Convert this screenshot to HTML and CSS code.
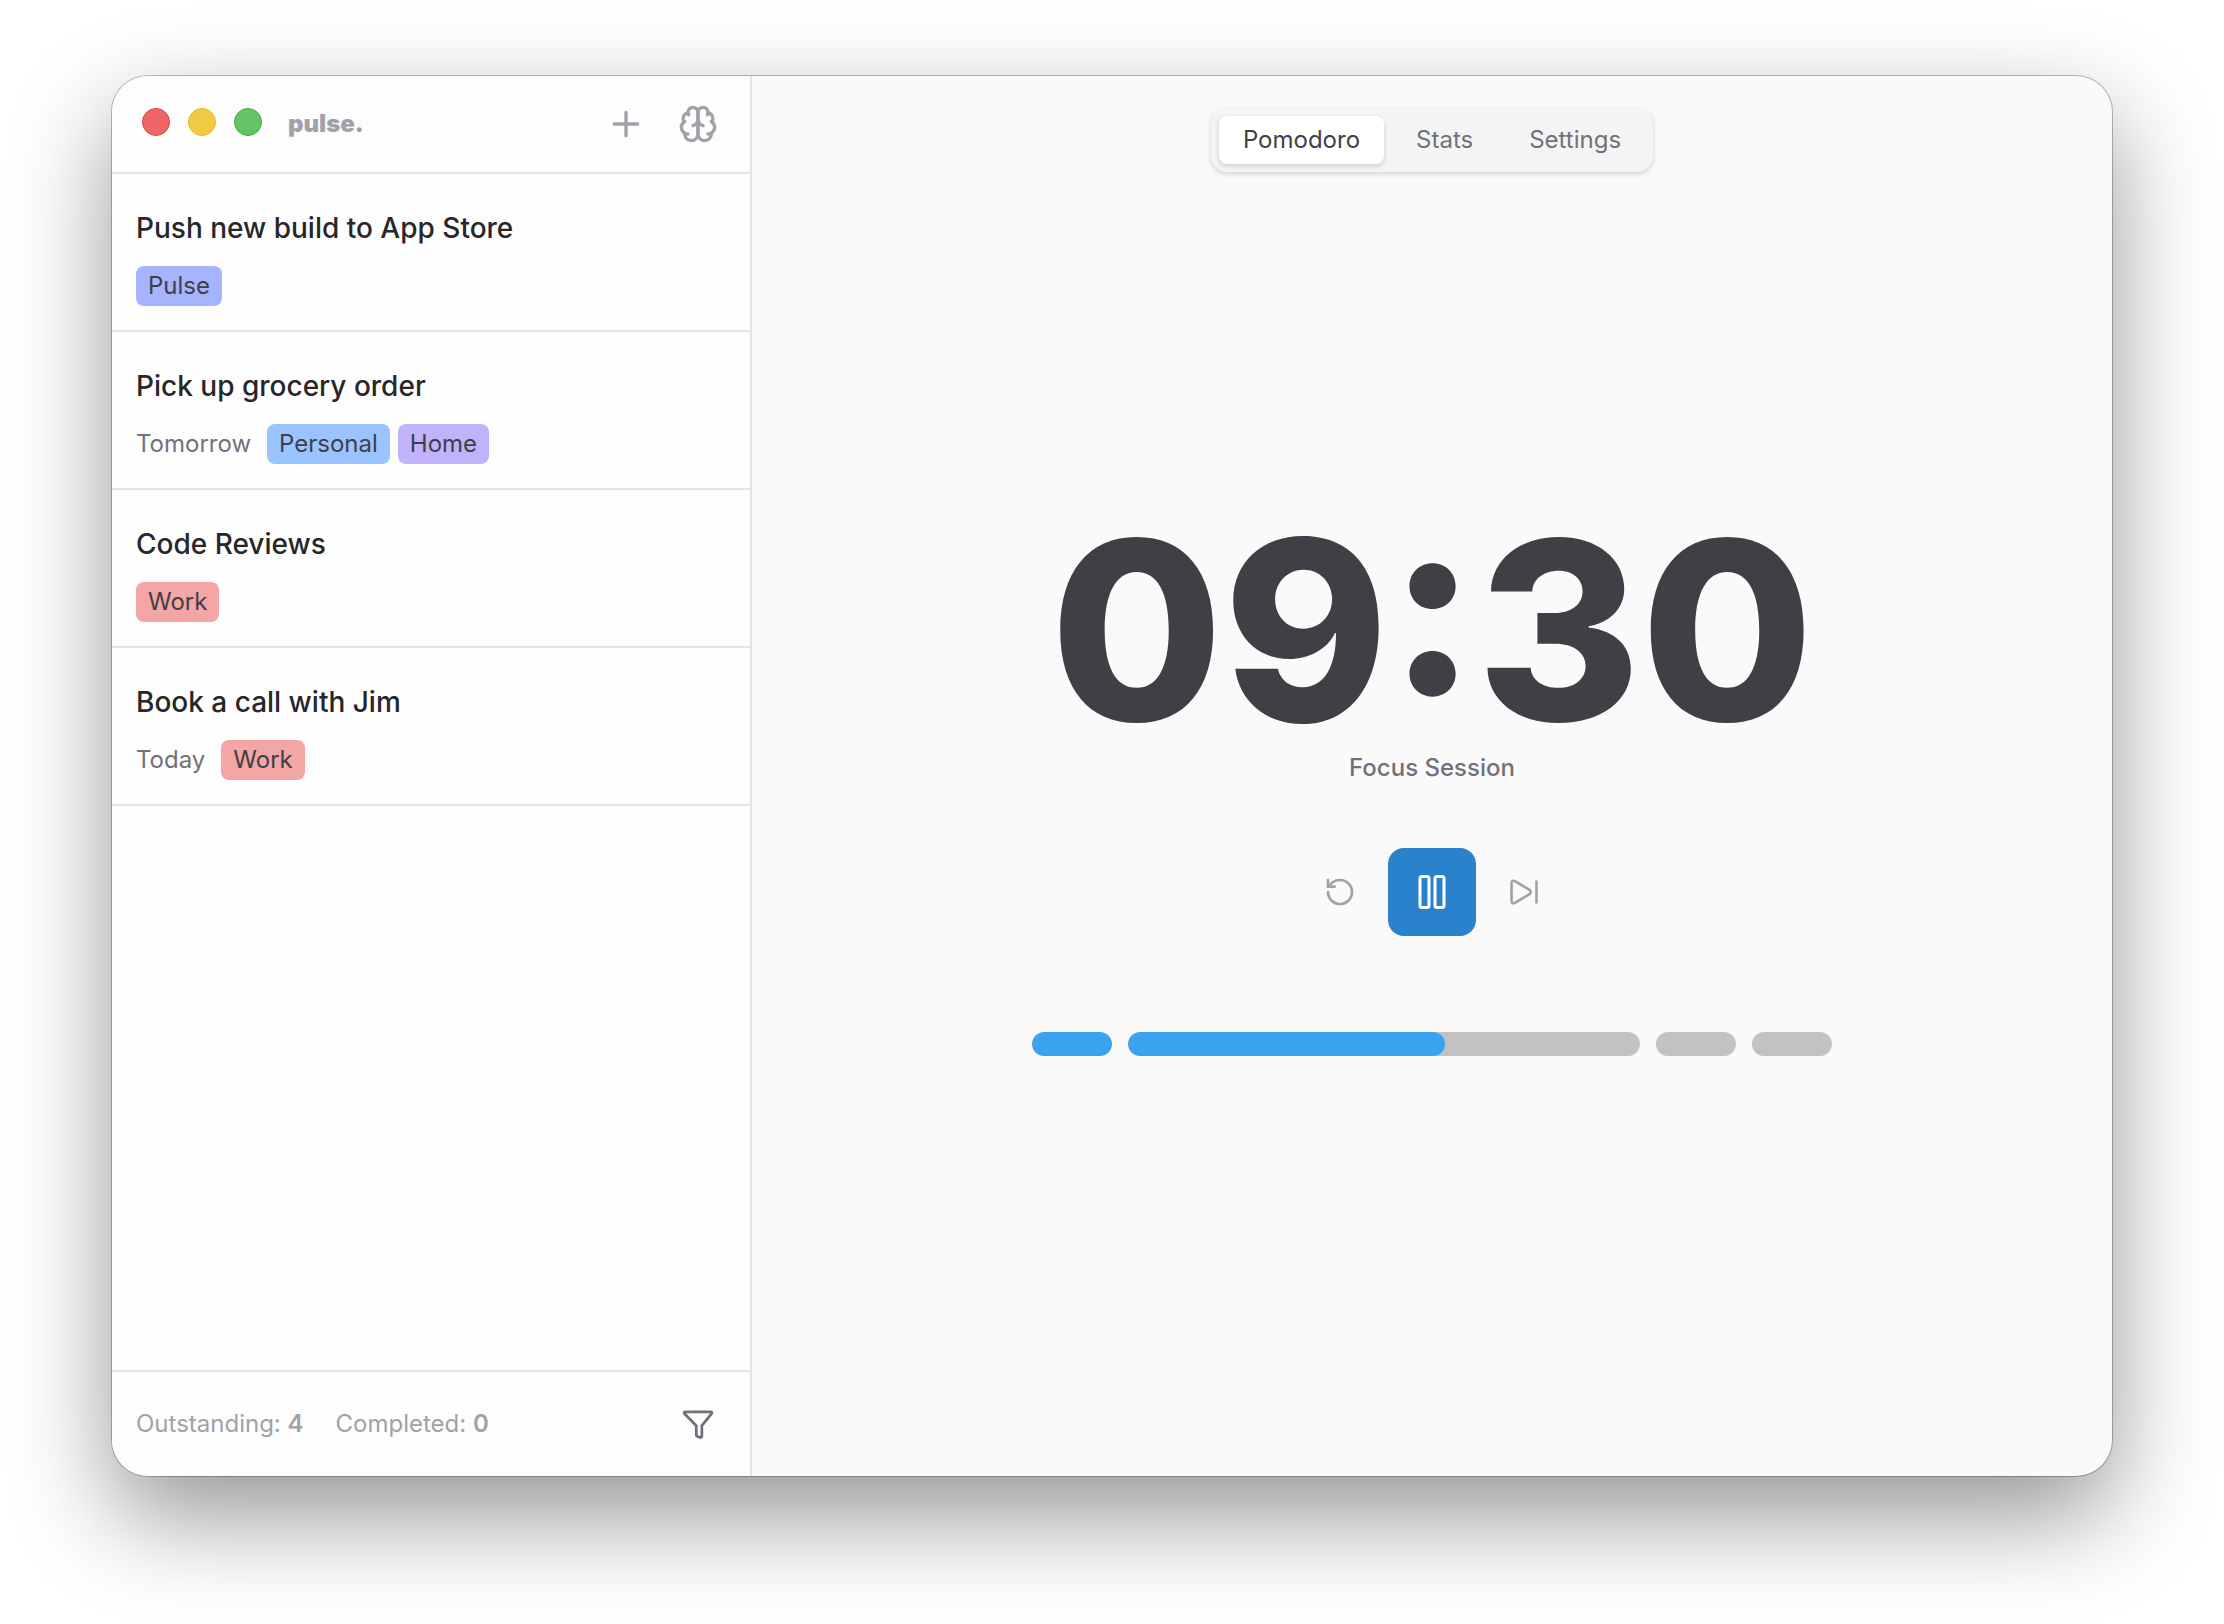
FILE: index.html
```html
<!DOCTYPE html>
<html lang="en">
<head>
    <meta charset="UTF-8">
    <meta name="viewport" content="width=device-width, initial-scale=1.0">
    <title>pulse.</title>
    <link rel="stylesheet" href="styles.css">
</head>
<body>
    <div class="window">
        <aside class="sidebar">
            <header class="titlebar">
                <div class="lights">
                    <button class="light close" aria-label="Close"></button>
                    <button class="light minimize" aria-label="Minimize"></button>
                    <button class="light maximize" aria-label="Maximize"></button>
                </div>
                <span class="logo">pulse.</span>
                <div class="actions">
                    <button class="icon-btn" aria-label="Add task">
                        <svg class="icon-lg" viewBox="0 0 24 24"><path d="M5 12h14M12 5v14"/></svg>
                    </button>
                    <button class="icon-btn" aria-label="Focus mode">
                        <svg class="icon-lg" viewBox="0 0 24 24">
                            <path d="M12 5a3 3 0 1 0-5.997.125 4 4 0 0 0-2.526 5.77 4 4 0 0 0 .556 6.588A4 4 0 1 0 12 18Z"/>
                            <path d="M12 5a3 3 0 1 1 5.997.125 4 4 0 0 1 2.526 5.77 4 4 0 0 1-.556 6.588A4 4 0 1 1 12 18Z"/>
                            <path d="M15 13a4.5 4.5 0 0 1-3-4 4.5 4.5 0 0 1-3 4"/>
                            <path d="M17.599 6.5a3 3 0 0 0 .399-1.375M6.003 5.125A3 3 0 0 0 6.401 6.5M3.477 10.896a4 4 0 0 1 .585-.396M19.938 10.5a4 4 0 0 1 .585.396M6 18a4 4 0 0 1-1.967-.516M19.967 17.484A4 4 0 0 1 18 18"/>
                        </svg>
                    </button>
                </div>
            </header>

            <ul class="tasks">
                <li class="task">
                    <h2>Push new build to App Store</h2>
                    <div class="meta"><span class="tag indigo">Pulse</span></div>
                </li>
                <li class="task">
                    <h2>Pick up grocery order</h2>
                    <div class="meta">
                        <span class="due">Tomorrow</span>
                        <span class="tag blue">Personal</span>
                        <span class="tag violet">Home</span>
                    </div>
                </li>
                <li class="task">
                    <h2>Code Reviews</h2>
                    <div class="meta"><span class="tag red">Work</span></div>
                </li>
                <li class="task">
                    <h2>Book a call with Jim</h2>
                    <div class="meta">
                        <span class="due">Today</span>
                        <span class="tag red">Work</span>
                    </div>
                </li>
            </ul>

            <footer class="summary">
                <span>Outstanding: <b>4</b></span>
                <span>Completed: <b>0</b></span>
                <button class="icon-btn filter" aria-label="Filter tasks">
                    <svg class="icon-sm" viewBox="0 0 15 15"><path stroke-width="1.3" d="M1.5 1.8h12a.5.5 0 0 1 .4.8L9.3 8.3v5a.6.6 0 0 1-.8.5l-1.4-.6a.6.6 0 0 1-.4-.5V8.3L1.1 2.6a.5.5 0 0 1 .4-.8Z"/></svg>
                </button>
            </footer>
        </aside>

        <main class="content">
            <nav class="tabs">
                <button class="tab active">Pomodoro</button>
                <button class="tab">Stats</button>
                <button class="tab">Settings</button>
            </nav>

            <section class="timer">
                <div class="time">09:30</div>
                <p class="session">Focus Session</p>

                <div class="controls">
                    <button class="icon-btn" aria-label="Restart">
                        <svg class="icon-sm" viewBox="0 0 24 24"><path d="M3 12a9 9 0 1 0 9-9 9.750 9.750 0 0 0-6.740 2.740L3 8"/><path d="M3 3v5h5"/></svg>
                    </button>
                    <button class="pause" aria-label="Pause">
                        <svg class="icon-pause" viewBox="0 0 40 40"><rect x="8" y="4.500" width="9" height="31" rx="2"/><rect x="23" y="4.500" width="9" height="31" rx="2"/></svg>
                    </button>
                    <button class="icon-btn" aria-label="Skip">
                        <svg class="icon-sm" viewBox="0 0 32 32"><path stroke-width="2.600" d="M3.500 7.500v17q0 4 3.500 2.300l14.500-8.600q2.600-2.200 0-4.400L7 5.200q-3.500-1.700-3.500 2.300Z"/><path stroke-width="2.600" d="M28.500 5.500v21"/></svg>
                    </button>
                </div>

                <div class="progress">
                    <div class="bar short"><div class="fill" style="width: 100%"></div></div>
                    <div class="bar"><div class="fill" style="width: 62%"></div></div>
                    <div class="bar short"></div>
                    <div class="bar short"></div>
                </div>
            </section>
        </main>
    </div>
</body>
</html>
```

FILE: styles.css
```css
* {
    box-sizing: border-box;
}
body {
    margin: 0;
    padding: 76px 112px 148px;
    height: 100vh;
    background: #fff;
    font-family: Inter, "Liberation Sans", sans-serif;
    font-size: 24px;
    line-height: 32px;
    color: #71717a;
}
button {
    border: 0;
    padding: 0;
    background: none;
    font: inherit;
    color: inherit;
    cursor: pointer;
}
svg {
    display: block;
    fill: none;
    stroke: currentColor;
    stroke-width: 2;
    stroke-linecap: round;
    stroke-linejoin: round;
}
.window {
    display: flex;
    height: 100%;
    border-radius: 36px;
    background: #fafafa;
    overflow: hidden;
    box-shadow: 0 0 0 1px rgba(0, 0, 0, 0.25), 0 40px 100px rgba(0, 0, 0, 0.42);
}

/* Sidebar */
.sidebar {
    display: flex;
    flex-direction: column;
    width: 32%;
    background: #fdfdfd;
    border-right: 2px solid #e4e4e7;
}
.titlebar {
    display: flex;
    align-items: center;
    height: 98px;
    padding: 0 32px 0 30px;
    border-bottom: 2px solid #e4e4e7;
    color: #a1a1aa;
}
.lights {
    display: flex;
    gap: 18px;
    padding-bottom: 4px;
}
.light {
    width: 28px;
    height: 28px;
    border-radius: 50%;
    border: 1px solid;
}
.close {
    background: #ee6666;
    border-color: #e14545;
}
.minimize {
    background: #f2c945;
    border-color: #e9b90f;
}
.maximize {
    background: #66c466;
    border-color: #3bac3e;
}
.logo {
    margin-left: 26px;
    font-weight: 900;
}
.actions {
    display: flex;
    gap: 32px;
    margin-left: auto;
}
.icon-lg {
    width: 40px;
    height: 40px;
}
.tasks {
    flex: 1;
    margin: 0;
    padding: 0;
    list-style: none;
}
.task {
    padding: 36px 24px 24px;
    border-bottom: 2px solid #e4e4e7;
}
.task h2 {
    margin: 0 0 20px;
    font-size: 28px;
    line-height: 36px;
    font-weight: 500;
    color: #27272a;
}
.meta {
    display: flex;
    align-items: center;
    gap: 8px;
}
.due {
    margin-right: 8px;
}
.tag {
    padding: 4px 12px;
    border-radius: 8px;
    color: #3f3f46;
}
.indigo {
    background: #a5b4fc;
}
.blue {
    background: #99c4ff;
}
.violet {
    background: #c1b2fc;
}
.red {
    background: #f4a5a5;
}
.summary {
    display: flex;
    align-items: center;
    gap: 32px;
    height: 106px;
    padding: 0 36px 0 24px;
    border-top: 2px solid #e4e4e7;
    color: #a1a1aa;
}
.summary b {
    font-weight: 600;
}
.filter {
    margin-left: auto;
    color: #71717a;
}
.icon-sm {
    width: 32px;
    height: 32px;
}

/* Main panel */
.content {
    display: flex;
    flex: 1;
    flex-direction: column;
    align-items: center;
}
.tabs {
    display: flex;
    margin-top: 32px;
    padding: 8px;
    border-radius: 16px;
    background: #f4f4f5;
    box-shadow: 0 2px 5px rgba(0, 0, 0, 0.16);
}
.tab {
    height: 48px;
    padding: 0 24px;
    border-radius: 8px;
}
.tab + .tab {
    margin-left: 8px;
}
.tab.active {
    background: #fff;
    color: #3f3f46;
    box-shadow: 0 2px 5px rgba(0, 0, 0, 0.16);
}
.timer {
    display: flex;
    flex: 1;
    flex-direction: column;
    align-items: center;
    justify-content: center;
    width: 800px;
    max-width: 100%;
    padding-bottom: 84px;
}
.time {
    font-size: 250px;
    line-height: 244px;
    font-weight: 800;
    color: #3f3f46;
}
.session {
    margin: 0;
    font-weight: 500;
}
.controls {
    display: flex;
    align-items: center;
    gap: 32px;
    margin: 64px 0 96px;
    color: #a1a1aa;
}
.pause {
    display: flex;
    align-items: center;
    justify-content: center;
    width: 88px;
    height: 88px;
    border-radius: 16px;
    background: #2b82cc;
    color: #fff;
}
.icon-pause {
    width: 40px;
    height: 40px;
    stroke-width: 3;
}
.progress {
    display: flex;
    gap: 16px;
    width: 100%;
}
.bar {
    flex: 1;
    height: 24px;
    border-radius: 12px;
    background: #c2c2c4;
    overflow: hidden;
}
.short {
    flex: 0 0 10%;
}
.fill {
    height: 100%;
    border-radius: 12px;
    background: #3aa3f0;
}
```
